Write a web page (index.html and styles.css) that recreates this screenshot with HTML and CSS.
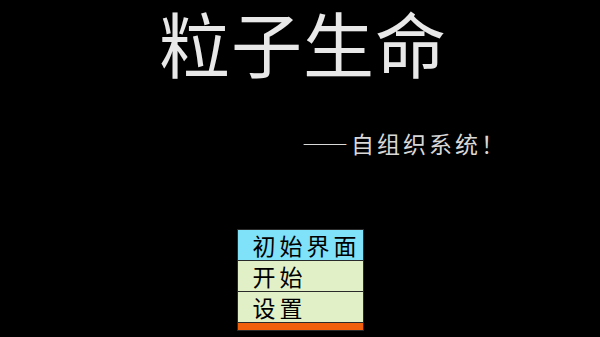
FILE: index.html
```html
<html lang="zh">
<head>
  <meta charset="UTF-8">
  <title>粒子生命</title>
  <link rel="stylesheet" href="styles.css">
</head>
<body>
  <div class="screen">
    <h1 class="title">粒子生命</h1>
    <div class="subtitle">——自组织系统！</div>
    <div class="menu">
      <div class="item active">初始界面</div>
      <div class="item">开始</div>
      <div class="item">设置</div>
      <div class="bar"></div>
    </div>
  </div>
</body>
</html>
```

FILE: styles.css
```css
body {
  margin: 0;
  padding: 0;
  background: #000;
  font-family: "Noto Sans CJK SC", "DejaVu Sans", sans-serif;
  color: #e6e6e6;
}

.screen {
  width: 600px;
  height: 337px;
  display: flex;
  flex-direction: column;
  align-items: center;
}

.title {
  margin: 8px 0 0 0;
  padding-left: 6px;
  font-family: "Liberation Sans", "Noto Sans CJK SC", sans-serif;
  font-size: 71px;
  font-weight: 400;
  line-height: 80px;
  letter-spacing: 1px;
  color: #e8e8e8;
}

.subtitle {
  align-self: flex-start;
  margin: 40px 0 0 302px;
  font-size: 23px;
  line-height: 30px;
  color: #d8d8d8;
  letter-spacing: 3px;
}

.menu {
  margin-top: 71px;
  width: 125px;
  border: 1px solid #2a2a2a;
  background: #2a2a2a;
  display: flex;
  flex-direction: column;
  gap: 1px;
}

.item {
  height: 30px;
  line-height: 30px;
  padding-left: 15px;
  font-size: 23px;
  letter-spacing: 4px;
  color: #000;
  background: #e2f0c8;
}

.item.active {
  background: #80e2f8;
}

.bar {
  height: 7px;
  background: #f0600c;
}
```
